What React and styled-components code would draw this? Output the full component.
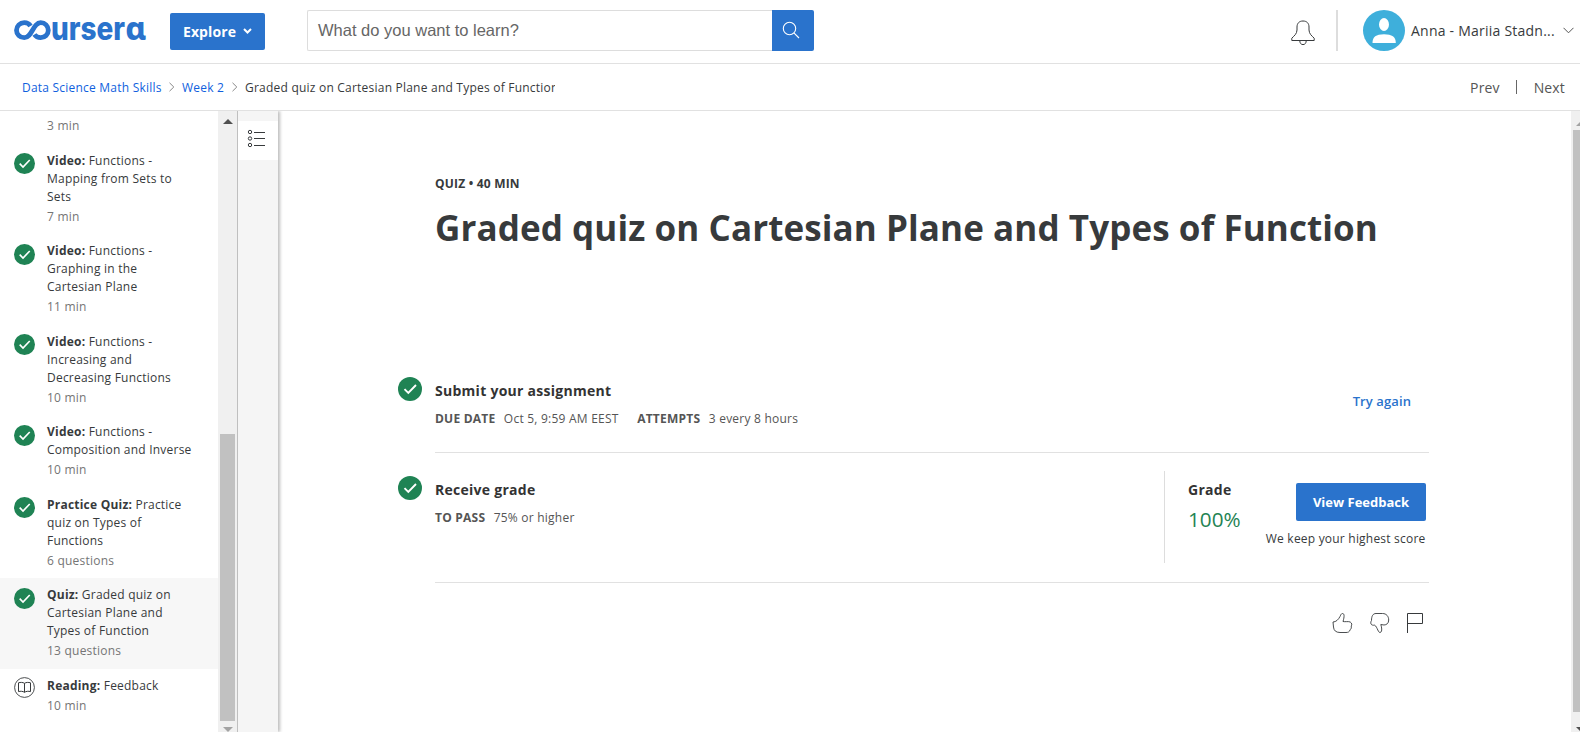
import React from 'react';
import styled, { createGlobalStyle } from 'styled-components';

const GlobalStyle = createGlobalStyle`
  * { box-sizing: border-box; }
  html, body { margin: 0; height: 100%; overflow: hidden; }
  body { font-family: "Open Sans", "Noto Sans", sans-serif; background: #fff; color: #373a3c; }
  svg { display: block; flex: none; }
`;

const Page = styled.div`
  display: flex; flex-direction: column; width: 1580px; height: 732px; overflow: hidden;
`;
const Header = styled.header`
  display: flex; align-items: center; height: 64px; flex: none;
  padding: 0 6px 3px 14px; border-bottom: 1px solid #e1e1e1;
`;
const ExploreButton = styled.button`
  display: flex; align-items: center; justify-content: center; gap: 7px;
  width: 95px; height: 37px; margin: 2px 0 0 24px; padding: 0;
  border: 0; border-radius: 2px; background: #2a73cc; color: #fff;
  font: 700 14px "Open Sans", sans-serif; letter-spacing: 0.1px;
`;
const Search = styled.div`
  display: flex; width: 507px; height: 41px; margin-left: 42px;
`;
const SearchField = styled.div`
  flex: 1; display: flex; align-items: center; padding: 1px 0 0 10px;
  border: 1px solid #ddd; border-right: 0; border-radius: 2px 0 0 2px;
  font: 16.5px "Liberation Sans", Arial, sans-serif; color: #666;
`;
const SearchButton = styled.div`
  width: 42px; display: flex; align-items: center; padding-left: 10px;
  background: #2a73cc; border-radius: 0 2px 2px 0;
`;
const Account = styled.div`
  display: flex; align-items: center; margin-left: auto; height: 41px;
`;
const HeaderRule = styled.div`
  width: 2px; height: 41px; margin: 0 25px 0 21px; background: #ddd;
`;
const UserName = styled.span`
  margin: 0 8px 0 6px; width: 144px; font-size: 14px; letter-spacing: 0.23px; white-space: nowrap;
`;
const Crumbs = styled.nav`
  display: flex; align-items: center; height: 47px; flex: none; padding: 0 15px 0 22px;
  border-bottom: 1px solid #e1e1e1; font-size: 12px; letter-spacing: 0.22px; white-space: nowrap;
`;
const Crumb = styled.span`
  color: ${p => (p.$link ? '#105fde' : '#373a3c')};
  width: ${p => p.$w}px; overflow: hidden;
`;
const CrumbArrow = styled.span`
  width: ${p => p.$w}px; display: flex; justify-content: center;
`;
const Pager = styled.div`
  display: flex; align-items: center; gap: 16.5px; margin-left: auto;
  font-size: 14px; letter-spacing: 0.15px; color: #555;
`;
const PagerRule = styled.div`
  width: 1px; height: 14px; background: #666;
`;
const Body = styled.div`
  display: flex; flex: 1; min-height: 0;
`;
const Lessons = styled.aside`
  width: 218px; flex: none; overflow: hidden; padding-top: 4px;
`;
const Lesson = styled.div`
  display: flex; align-items: flex-start; gap: 12px; padding: 8px 18px 8.5px 14px;
  background: ${p => (p.$active ? '#f7f7f7' : 'transparent')};
  font-size: 12px; line-height: 18px; letter-spacing: 0.22px; white-space: nowrap;
  svg { margin-top: ${p => (p.$reading ? 0.5 : 1.5)}px; }
`;
const LessonTail = styled(Lesson)`
  padding: 0 0 8.5px 47px;
`;
const Duration = styled.div`
  margin-top: 2px; color: #757575;
`;
const ScrollTrack = styled.div`
  width: 19px; flex: none; display: flex; flex-direction: column;
  background: #f0f0f0; padding: 8px 0 0 2px;
`;
const ScrollThumb = styled.div`
  flex: none; width: 15px; height: 287px; margin: 310px 0 6px; background: #c1c1c1;
`;
const Arrow = styled.div`
  width: 0; height: 0; margin-left: 3px;
  border: 5px solid transparent;
  ${p => (p.$down
    ? `border-bottom: 0; border-top: 5px solid ${p.$color};`
    : `border-top: 0; border-bottom: 5px solid ${p.$color};`)}
`;
const Rail = styled.div`
  width: 41px; flex: none; padding-top: 10px; border-left: 1px solid #bfbfbf;
  background: #f5f5f5; box-shadow: 2px 0 3px rgba(0,0,0,.26); clip-path: inset(0 -6px 0 0);
`;
const RailButton = styled.div`
  height: 39px; background: #fff; padding: 8px 0 0 9px;
`;
const Main = styled.main`
  flex: 1; min-width: 0; padding: 64px 142px 0 120px;
`;
const Kicker = styled.div`
  margin-left: 37px; font-size: 12px; font-weight: 700; line-height: 18px; letter-spacing: 0.2px;
`;
const Title = styled.h1`
  margin: 9px 0 0 37px; font-size: 35px; font-weight: 700; line-height: 52px;
  letter-spacing: 0.09px; white-space: nowrap;
`;
const Steps = styled.section`
  margin-top: 115px;
`;
const Step = styled.div`
  display: flex; align-items: flex-start; gap: 13px; height: ${p => p.$h}px;
  > svg { margin-top: ${p => p.$icon}px; }
`;
const StepBody = styled.div`
  flex: 1; height: 100%; display: flex; border-bottom: 1px solid #e1e1e1; padding-top: ${p => p.$top}px;
`;
const StepText = styled.div`
  flex: 1; padding-top: ${p => p.$top}px;
`;
const StepTitle = styled.div`
  font-size: 14px; font-weight: 700; line-height: 20px; letter-spacing: 0.27px; color: #333;
`;
const Facts = styled.div`
  display: flex; margin-top: 9px; font-size: 12px; line-height: 18px; letter-spacing: 0.23px;
  color: #555; white-space: nowrap;
  b { font-weight: 700; margin-right: 8.4px; }
  span { margin-right: 18.5px; }
`;
const TryAgain = styled.a`
  padding: 22px 18px 0 0; font-size: 13px; font-weight: 600; line-height: 20px;
  letter-spacing: 0.1px; color: #2a73cc;
`;
const GradePanel = styled.div`
  display: flex; height: 92px; border-left: 1px solid #ddd; padding-left: 23px; width: 265px;
`;
const Grade = styled.div`
  padding-top: 9px; width: 78px;
`;
const Score = styled.div`
  font-size: 20.7px; line-height: 28px; margin-top: 4.5px; color: #1f8354;
`;
const Feedback = styled.div`
  display: flex; flex-direction: column; align-items: flex-end; width: 160px; padding-top: 12px;
`;
const FeedbackButton = styled.button`
  width: 130px; height: 38px; padding: 0; border: 0; border-radius: 2px; background: #2a73cc; color: #fff;
  font: 700 13px "Open Sans", sans-serif;
`;
const Note = styled.div`
  margin: 9px 0.5px 0 0; font-size: 12px; line-height: 18px; letter-spacing: 0.21px; white-space: nowrap;
`;
const Reactions = styled.div`
  display: flex; justify-content: flex-end; gap: 17px; padding: 29px 6px 0 0;
`;
const PageScroll = styled.div`
  width: 9px; flex: none; background: #f0f0f0; overflow: hidden; padding: 10px 0 0 2px;
`;
const PageThumb = styled.div`
  height: 582px; margin: 4px 0 15px; background: #c1c1c1;
`;

const Logo = () => (
  <svg width="132" height="24" viewBox="0 0 132 24" role="img" aria-label="coursera" overflow="visible">
    <path
      d="M16.500 8C15.200 5.700 13 4.700 10.300 4.700C5.900 4.700 2.500 8 2.500 12.200S5.900 19.700 10.300 19.700C18 19.700 19 4.700 26.700 4.700C31 4.700 34.300 8 34.300 12.200S31 19.700 26.700 19.700C24 19.700 21.800 18.600 20.400 16.500"
      fill="none" stroke="#2a73cc" strokeWidth="4.8"
    />
    <g fill="#2a73cc" fontSize="32">
      <text
        x="37" y="21.5" textLength="74" lengthAdjust="spacingAndGlyphs"
        fontFamily="Inter, sans-serif" fontWeight="800"
      >urser</text>
      <text
        x="111.2" y="21.5" textLength="20.5" lengthAdjust="spacingAndGlyphs"
        fontFamily="'Noto Sans', 'DejaVu Sans', sans-serif" fontWeight="800"
      >ɑ</text>
    </g>
  </svg>
);
const Check = ({ size }) => (
  <svg width={size} height={size} viewBox="0 0 24 24">
    <circle cx="12" cy="12" r="12" fill="#1f8354" />
    <path d="M6.5 12.2L10.3 16L18 8" fill="none" stroke="#fff" strokeWidth="1.9" />
  </svg>
);
const Book = () => (
  <svg width="21" height="21" viewBox="0 0 21 21" fill="none" stroke="#373a3c">
    <circle cx="10.5" cy="10.5" r="9.9" strokeWidth="0.9" />
    <path d="M10.5 6.3C8.8 5.2 6.5 5.2 4.5 5.8V14.6C6.5 14 8.8 14.2 10.5 15.3C12.2 14.2 14.5 14 16.5 14.6V5.8C14.5 5.2 12.2 5.2 10.5 6.3V15.3" />
  </svg>
);
const Chevron = ({ w, h, d, color, sw = 1 }) => (
  <svg width={w} height={h} viewBox={`0 0 ${w} ${h}`}>
    <path d={d} fill="none" stroke={color} strokeWidth={sw} />
  </svg>
);
const Thumb = () => (
  <svg width="21" height="22" viewBox="0 0 21 22" fill="none" stroke="#373a3c">
    <path d="M1 10C4 10 6.500 7.500 8 4.500C9 2.500 9.300 1.500 10.500 1.500C12.500 1.500 12.500 4.500 11 9.500C13 10 16.500 9.200 18.200 10C20.200 11.300 20 13 19.200 14C19.600 15.500 19.200 17 18.200 17.700C17.500 20 16 20.500 14 20.500H8C4 20.500 1.700 18.500 1.500 15Z" strokeWidth="0.9" />
  </svg>
);
const ThumbDown = () => (
  <svg width="20" height="22" viewBox="0 0 20 22" fill="none" stroke="#373a3c">
    <path d="M1 12C.6 10.8 .8 9.500 1.500 8.500C1.500 4 3 1.500 6 1.500H12.500C16.500 1.500 18.700 4.500 18.700 8C18.700 11.500 16.500 12.800 14 13L10.800 12.500C11.800 15.500 12.300 19 10.700 20.300C9.400 21 8.800 20 7.800 18C7 16.200 6 14 4.800 13.200C3.200 13.300 1.800 13.300 1 12Z" strokeWidth="0.9" />
  </svg>
);
const Flag = () => (
  <svg width="16" height="22" viewBox="0 0 16 22" fill="none" stroke="#373a3c">
    <path d="M.5 21V1.5H15.5V11.5H.5" />
  </svg>
);

const lessons = [
  { kind: 'Video:', lines: ['Functions -', 'Mapping from Sets to', 'Sets'], length: '7 min' },
  { kind: 'Video:', lines: ['Functions -', 'Graphing in the', 'Cartesian Plane'], length: '11 min' },
  { kind: 'Video:', lines: ['Functions -', 'Increasing and', 'Decreasing Functions'], length: '10 min' },
  { kind: 'Video:', lines: ['Functions -', 'Composition and Inverse'], length: '10 min' },
  { kind: 'Practice Quiz:', lines: ['Practice', 'quiz on Types of', 'Functions'], length: '6 questions' },
  { kind: 'Quiz:', lines: ['Graded quiz on', 'Cartesian Plane and', 'Types of Function'], length: '13 questions', active: true },
  { kind: 'Reading:', lines: ['Feedback'], length: '10 min', reading: true },
];

export default function App() {
  return (
    <Page>
      <GlobalStyle />
      <Header>
        <Logo />
        <ExploreButton>
          Explore
          <Chevron w={9} h={6} d="M1 1L4.5 4.5L8 1" color="#fff" sw={2} />
        </ExploreButton>
        <Search>
          <SearchField>What do you want to learn?</SearchField>
          <SearchButton>
            <svg width="18" height="18" viewBox="0 0 18 18" fill="none" stroke="#fff" strokeWidth="1.1">
              <circle cx="7.5" cy="7.5" r="6.2" />
              <path d="M11.9 11.9L17 17" />
            </svg>
          </SearchButton>
        </Search>
        <Account>
          <svg width="24" height="26" viewBox="0 0 24 26" fill="none" stroke="#373a3c" style={{ marginTop: 6 }}>
            <path d="M.8 20.5V18.2C3.5 15.5 5.8 14 6 10V7C6 3.5 8 1 12 1S18 3.5 18 7V10C18.2 14 20.5 15.5 23.2 18.2V20.5ZM8.8 20.8C8.8 23 10 24.6 12 24.6S15.2 23 15.2 20.8" />
          </svg>
          <HeaderRule />
          <svg width="42" height="41" viewBox="0 0 42 41">
            <ellipse cx="21" cy="20.5" rx="21" ry="20.5" fill="#3eafdb" />
            <ellipse cx="21" cy="14.5" rx="5" ry="6.5" fill="#fff" />
            <path d="M9.5 33C9.5 27 13 24.3 21 24.3S32.800 27 32.800 33Z" fill="#fff" />
          </svg>
          <UserName>Anna - Mariia Stadn...</UserName>
          <Chevron w={11} h={7} d="M.5 .8L5.500 5.800L10.500 .8" color="#555" />
        </Account>
      </Header>

      <Crumbs>
        <Crumb $link $w={140}>Data Science Math Skills</Crumb>
        <CrumbArrow $w={20}><Chevron w={6} h={10} d="M.5 .8L4.800 5L.5 9.200" color="#888" /></CrumbArrow>
        <Crumb $link $w={42}>Week 2</Crumb>
        <CrumbArrow $w={21}><Chevron w={6} h={10} d="M.5 .8L4.800 5L.5 9.200" color="#888" /></CrumbArrow>
        <Crumb $w={310}>Graded quiz on Cartesian Plane and Types of Function</Crumb>
        <Pager>
          <span>Prev</span>
          <PagerRule />
          <span>Next</span>
        </Pager>
      </Crumbs>

      <Body>
        <Lessons>
          <LessonTail><Duration>3 min</Duration></LessonTail>
          {lessons.map((l, i) => (
            <Lesson key={i} $active={l.active} $reading={l.reading}>
              {l.reading ? <Book /> : <Check size={21} />}
              <div>
                {l.lines.map((t, n) => (
                  <div key={t}>{n === 0 && <b>{l.kind} </b>}{t}</div>
                ))}
                <Duration>{l.length}</Duration>
              </div>
            </Lesson>
          ))}
        </Lessons>
        <ScrollTrack>
          <Arrow $color="#505050" />
          <ScrollThumb />
          <Arrow $down $color="#a3a3a3" />
        </ScrollTrack>
        <Rail>
          <RailButton>
            <svg width="20" height="20" viewBox="0 0 20 20" fill="none" stroke="#373a3c">
              <circle cx="3" cy="3" r="1.7" />
              <circle cx="3" cy="9.500" r="1.7" />
              <circle cx="3" cy="16" r="1.7" />
              <path d="M7 3.500H18M7 9.500H18M7 16.500H18" />
            </svg>
          </RailButton>
        </Rail>
        <Main>
          <Kicker>QUIZ • 40 MIN</Kicker>
          <Title>Graded quiz on Cartesian Plane and Types of Function</Title>
          <Steps>
            <Step $h={84} $icon={8}>
              <Check size={24} />
              <StepBody $top={0}>
                <StepText $top={12}>
                  <StepTitle>Submit your assignment</StepTitle>
                  <Facts>
                    <b>DUE DATE</b><span>Oct 5, 9:59 AM EEST</span>
                    <b>ATTEMPTS</b><span>3 every 8 hours</span>
                  </Facts>
                </StepText>
                <TryAgain>Try again</TryAgain>
              </StepBody>
            </Step>
            <Step $h={130} $icon={23}>
              <Check size={24} />
              <StepBody $top={18}>
                <StepText $top={9}>
                  <StepTitle>Receive grade</StepTitle>
                  <Facts><b>TO PASS</b><span>75% or higher</span></Facts>
                </StepText>
                <GradePanel>
                  <Grade>
                    <StepTitle>Grade</StepTitle>
                    <Score>100%</Score>
                  </Grade>
                  <Feedback>
                    <FeedbackButton>View Feedback</FeedbackButton>
                    <Note>We keep your highest score</Note>
                  </Feedback>
                </GradePanel>
              </StepBody>
            </Step>
          </Steps>
          <Reactions>
            <Thumb />
            <ThumbDown />
            <Flag />
          </Reactions>
        </Main>
        <PageScroll>
          <Arrow $color="#a3a3a3" />
          <PageThumb />
          <Arrow $down $color="#505050" />
        </PageScroll>
      </Body>
    </Page>
  );
}
